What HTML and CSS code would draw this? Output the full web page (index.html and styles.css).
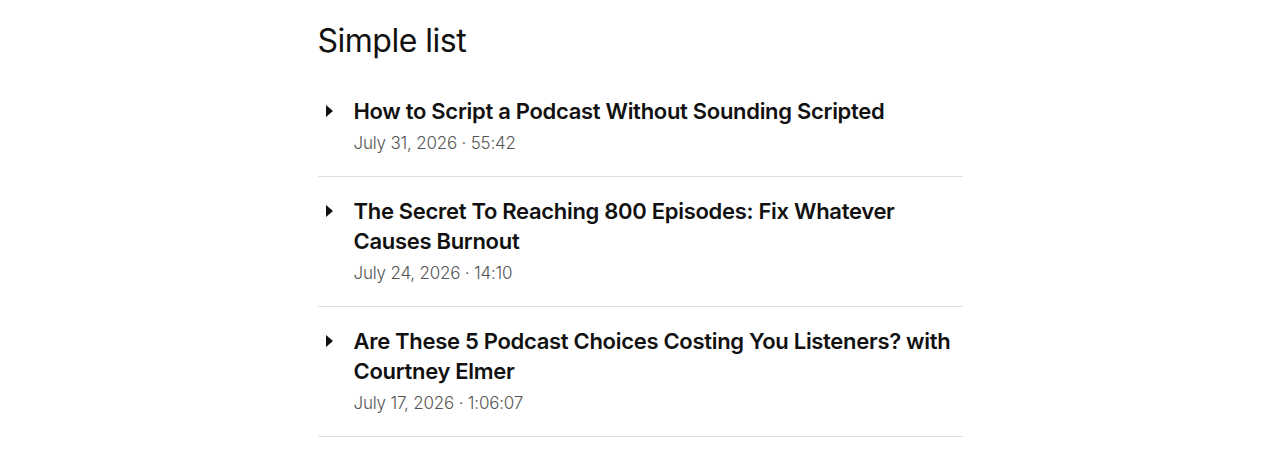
FILE: index.html
```html
<!DOCTYPE html>
<html lang="en">

<head>
    <meta charset="UTF-8" />
    <meta name="viewport" content="width=device-width, initial-scale=1.0" />
    <title>Simple list</title>
    <link rel="stylesheet" href="styles.css">
</head>

<body>
    <main class="page">
        <h2 class="list-title">Simple list</h2>
        <ul class="episodes">
            <li class="episode">
                <span class="caret"></span>
                <div class="episode-text">
                    <h3 class="episode-name">How to Script a Podcast Without Sounding Scripted</h3>
                    <p class="episode-meta">July 31, 2026 &middot; 55:42</p>
                </div>
            </li>
            <li class="episode">
                <span class="caret"></span>
                <div class="episode-text">
                    <h3 class="episode-name">The Secret To Reaching 800 Episodes: Fix Whatever Causes Burnout</h3>
                    <p class="episode-meta">July 24, 2026 &middot; 14:10</p>
                </div>
            </li>
            <li class="episode">
                <span class="caret"></span>
                <div class="episode-text">
                    <h3 class="episode-name">Are These 5 Podcast Choices Costing You Listeners? with Courtney Elmer</h3>
                    <p class="episode-meta">July 17, 2026 &middot; 1:06:07</p>
                </div>
            </li>
        </ul>
    </main>
</body>

</html>
```

FILE: styles.css
```css
* {
    margin: 0px;
    padding: 0px;
    box-sizing: border-box;
}

body {
    background: #fff;
    color: #111;
    font-family: Inter, "Noto Sans", sans-serif;
}

.page {
    width: 645px;
    margin: 0 auto;
    padding-top: 21px;
}

.list-title {
    font-size: 32px;
    font-weight: 400;
    line-height: 40px;
    letter-spacing: -0.5px;
    margin-bottom: 16px;
}

.episodes {
    list-style: none;
}

.episode {
    display: flex;
    padding: 19px 0 18px;
    border-bottom: 1px solid #e0e0e0;
}

.caret {
    width: 0;
    height: 0;
    margin: 9px 21px 0 8px;
    border-top: 6px solid transparent;
    border-bottom: 6px solid transparent;
    border-left: 7px solid #111;
}

.episode-text {
    flex: 1;
}

.episode-name {
    font-size: 22px;
    font-weight: 600;
    line-height: 30px;
    letter-spacing: -0.3px;
}

.episode-meta {
    margin-top: 2px;
    font-size: 17px;
    font-weight: 300;
    line-height: 30px;
    color: #555;
    letter-spacing: -0.2px;
}
```
